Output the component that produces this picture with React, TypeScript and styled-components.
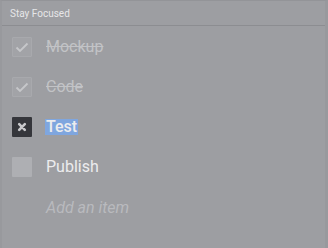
import styled, { createGlobalStyle } from 'styled-components';

const Global = createGlobalStyle`
  html, body {
    margin: 0;
    padding: 0;
    background: #9d9ea2;
  }
  body {
    font-family: Roboto, "Liberation Sans", sans-serif;
  }
`;

const Card = styled.div`
  width: 328px;
  height: 248px;
  box-sizing: border-box;
  background: #9d9ea2;
  border-top: 1px solid #939498;
  border-left: 2px solid #98999d;
  border-right: 3px solid #98999d;
`;

const Header = styled.div`
  height: 24px;
  display: flex;
  align-items: center;
  padding-left: 8px;
  font-size: 10px;
  color: #e6e6e8;
  border-bottom: 1px solid #8c8d91;
`;

const List = styled.div`
  display: flex;
  flex-direction: column;
  padding-top: 1px;
`;

const Row = styled.div`
  height: 40px;
  display: flex;
  align-items: center;
  gap: 13px;
  padding-left: 10px;
`;

const Box = styled.div<{ $kind: 'done' | 'active' | 'empty' }>`
  width: 20px;
  height: 20px;
  box-sizing: border-box;
  display: flex;
  align-items: center;
  justify-content: center;
  border-radius: 1px;
  background: ${p =>
    p.$kind === 'active' ? '#35363b' : p.$kind === 'empty' ? '#aeafb3' : '#a2a3a7'};
  border: ${p => (p.$kind === 'done' ? '1px solid #a8a9ad' : 'none')};
`;

const Label = styled.span<{ $done?: boolean; $selected?: boolean }>`
  font-size: 16px;
  line-height: 16px;
  color: ${p => (p.$done ? '#c2c3c6' : '#ececee')};
  text-decoration: ${p => (p.$done ? 'line-through' : 'none')};
  background: ${p => (p.$selected ? '#7fa6df' : 'transparent')};
  font-weight: ${p => (p.$selected ? 500 : 400)};
  padding: 0 1px;
`;

const AddItem = styled.span`
  font-size: 16px;
  font-style: italic;
  color: #b9babe;
  margin-left: 34px;
`;

function Check() {
  return (
    <svg width="14" height="14" viewBox="0 0 14 14">
      <path d="M1.5 7.5 L5 11 L12.5 3.5" fill="none" stroke="#c6c7ca" strokeWidth="1.8" />
    </svg>
  );
}

function Cross() {
  return (
    <svg width="10" height="10" viewBox="0 0 10 10">
      <path d="M2.2 2.2 L7.8 7.8 M7.8 2.2 L2.2 7.8" stroke="#c9c9cc" strokeWidth="2.6" strokeLinecap="round" />
    </svg>
  );
}

export default function App() {
  return (
    <Card>
      <Global />
      <Header>Stay Focused</Header>
      <List>
        <Row>
          <Box $kind="done"><Check /></Box>
          <Label $done>Mockup</Label>
        </Row>
        <Row>
          <Box $kind="done"><Check /></Box>
          <Label $done>Code</Label>
        </Row>
        <Row>
          <Box $kind="active"><Cross /></Box>
          <Label $selected>Test</Label>
        </Row>
        <Row>
          <Box $kind="empty" />
          <Label>Publish</Label>
        </Row>
        <Row>
          <AddItem>Add an item</AddItem>
        </Row>
      </List>
    </Card>
  );
}
